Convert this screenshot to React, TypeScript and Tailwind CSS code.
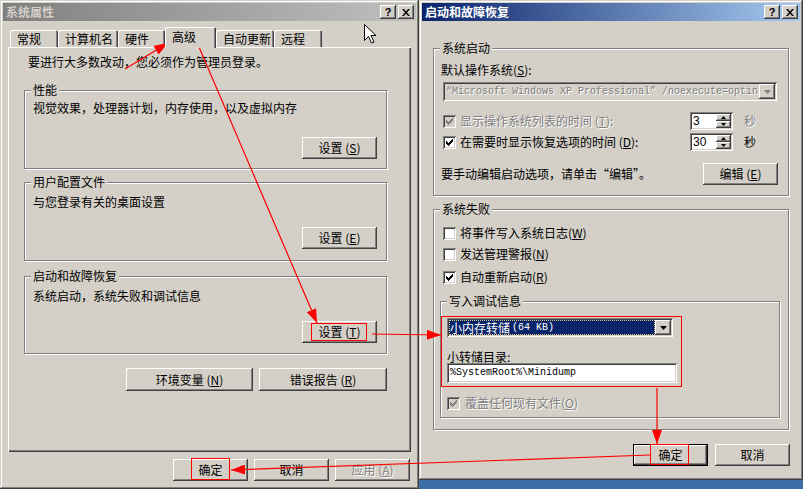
import React from "react";

const RAISED =
  "bg-[#d4d0c8] shadow-[inset_-1px_-1px_0_#404040,inset_1px_1px_0_#ffffff,inset_-2px_-2px_0_#808080]";
const SUNKEN =
  "shadow-[inset_1px_1px_0_#808080,inset_-1px_-1px_0_#ffffff,inset_2px_2px_0_#404040,inset_-2px_-2px_0_#d4d0c8]";
const WINDOW =
  "bg-[#d4d0c8] shadow-[inset_-1px_-1px_0_#404040,inset_1px_1px_0_#d4d0c8,inset_-2px_-2px_0_#808080,inset_2px_2px_0_#ffffff]";
const ETCHED = "border border-[#808080] shadow-[1px_1px_0_#ffffff,inset_1px_1px_0_#ffffff]";
const DIS = "text-[#808080] [text-shadow:1px_1px_0_#ffffff]";
const MONO = "font-['Liberation_Mono',monospace] text-[10px]";

function U({ c }: { c: string }) {
  return <span className="underline underline-offset-[1px]">{c}</span>;
}

function Btn({
  children,
  className = "",
  disabled = false,
  isDefault = false,
}: {
  children: React.ReactNode;
  className?: string;
  disabled?: boolean;
  isDefault?: boolean;
}) {
  const inner = (
    <div className={`flex h-full w-full items-center justify-center ${RAISED} ${disabled ? DIS : ""}`}>
      {children}
    </div>
  );
  return <div className={`${isDefault ? "border border-black" : ""} ${className}`}>{inner}</div>;
}

function CheckMark({ color }: { color: string }) {
  const cols = [
    [3, 5],
    [4, 6],
    [5, 7],
    [6, 6],
    [7, 5],
    [8, 4],
    [9, 3],
  ];
  return (
    <svg width="13" height="13" viewBox="0 0 13 13" className="block">
      {cols.map(([x, y]) => (
        <rect key={x} x={x} y={y} width="1" height="3" fill={color} />
      ))}
    </svg>
  );
}

function Check({ checked = false, disabled = false }: { checked?: boolean; disabled?: boolean }) {
  return (
    <div className={`h-[13px] w-[13px] shrink-0 ${disabled ? "bg-[#d4d0c8]" : "bg-white"} ${SUNKEN}`}>
      {checked && <CheckMark color={disabled ? "#808080" : "#000000"} />}
    </div>
  );
}

function Tri({ up = false, color = "#000" }: { up?: boolean; color?: string }) {
  return (
    <svg width="7" height="4" viewBox="0 0 7 4" className="block">
      <path d={up ? "M3.5 0 L7 4 L0 4 Z" : "M0 0 L7 0 L3.5 4 Z"} fill={color} />
    </svg>
  );
}

function SmallTri({ up = false }: { up?: boolean }) {
  return (
    <svg width="5" height="3" viewBox="0 0 5 3" className="block">
      <path d={up ? "M2.5 0 L5 3 L0 3 Z" : "M0 0 L5 0 L2.5 3 Z"} fill="#000" />
    </svg>
  );
}

function Spin({ value }: { value: string }) {
  return (
    <div className={`flex h-[18px] w-[43px] bg-white p-[2px] ${SUNKEN}`}>
      <div className="flex-1 pl-[1px] font-['Liberation_Sans',sans-serif] text-[12px] leading-[14px]">{value}</div>
      <div className="flex w-[15px] flex-col">
        <div className={`flex flex-1 items-center justify-center ${RAISED}`}>
          <SmallTri up />
        </div>
        <div className={`flex flex-1 items-center justify-center ${RAISED}`}>
          <SmallTri />
        </div>
      </div>
    </div>
  );
}

function TBtn({ children }: { children: React.ReactNode }) {
  return (
    <div className={`flex h-[14px] w-[16px] items-center justify-center text-black ${RAISED}`}>{children}</div>
  );
}

function TitleBar({ title, active }: { title: string; active: boolean }) {
  return (
    <div
      className={`flex h-[18px] shrink-0 items-center pl-[3px] pr-[2px] ${
        active
          ? "bg-[linear-gradient(to_right,#0a246a,#a6caf0)] text-white"
          : "bg-[linear-gradient(to_right,#808080,#c0c0c0)] text-[#d4d0c8]"
      }`}
    >
      <span className="flex-1 font-bold">{title}</span>
      <TBtn>
        <span className="font-['Liberation_Sans',sans-serif] text-[11px] font-bold leading-none">?</span>
      </TBtn>
      <div className="w-[2px]" />
      <TBtn>
        <svg width="8" height="7" viewBox="0 0 8 7" className="block">
          <path d="M0 0 L2 0 L4 2.5 L6 0 L8 0 L5 3.5 L8 7 L6 7 L4 4.5 L2 7 L0 7 L3 3.5 Z" fill="#000" />
        </svg>
      </TBtn>
    </div>
  );
}

function Tab({ children, w, selected = false }: { children: React.ReactNode; w: string; selected?: boolean }) {
  return (
    <div
      className={`flex shrink-0 items-center bg-[#d4d0c8] pl-[7px] shadow-[inset_1px_1px_0_#ffffff,inset_-1px_0_0_#404040,inset_-2px_0_0_#808080] rounded-t-[2px] ${w} ${
        selected ? "relative z-10 -mb-px h-[21px] pb-[2px]" : "h-[17px]"
      }`}
    >
      {children}
    </div>
  );
}

function Group({
  label,
  className = "",
  children,
}: {
  label: string;
  className?: string;
  children: React.ReactNode;
}) {
  return (
    <div className={`relative flex shrink-0 flex-col ${ETCHED} ${className}`}>
      <span className="absolute left-[6px] top-[-8px] bg-[#d4d0c8] px-[2px] leading-[14px]">{label}</span>
      {children}
    </div>
  );
}

function LeftWindow() {
  return (
    <div className={`flex h-[489px] w-[419px] shrink-0 flex-col p-[3px] ${WINDOW}`}>
      <TitleBar title="系统属性" active={false} />
      <div className="flex flex-col px-[5px]">
        <div className="flex h-[26px] items-end pl-[2px]">
          <Tab w="w-[48px]">常规</Tab>
          <Tab w="w-[60px]">计算机名</Tab>
          <Tab w="w-[47px]">硬件</Tab>
          <Tab w="w-[51px]" selected>
            高级
          </Tab>
          <Tab w="w-[58px]">自动更新</Tab>
          <Tab w="w-[48px]">远程</Tab>
        </div>
        <div className="flex h-[405px] flex-col bg-[#d4d0c8] shadow-[inset_1px_1px_0_#ffffff,inset_-1px_-1px_0_#404040,inset_-2px_-2px_0_#808080]">
          <p className="ml-[20px] mt-[8px]">要进行大多数改动，您必须作为管理员登录。</p>
          <Group label="性能" className="ml-[16px] mt-[21px] h-[79px] w-[363px]">
            <p className="pl-[8px] pt-[10px]">视觉效果，处理器计划，内存使用，以及虚拟内存</p>
            <div className="mt-[22px] flex justify-end pr-[9px]">
              <Btn className="h-[22px] w-[75px]">
                设置 (<U c="S" />)
              </Btn>
            </div>
          </Group>
          <Group label="用户配置文件" className="ml-[16px] mt-[13px] h-[79px] w-[363px]">
            <p className="pl-[8px] pt-[12px]">与您登录有关的桌面设置</p>
            <div className="mt-[18px] flex justify-end pr-[9px]">
              <Btn className="h-[22px] w-[75px]">
                设置 (<U c="E" />)
              </Btn>
            </div>
          </Group>
          <Group label="启动和故障恢复" className="ml-[16px] mt-[15px] h-[78px] w-[363px]">
            <p className="pl-[8px] pt-[12px]">系统启动，系统失败和调试信息</p>
            <div className="mt-[18px] flex justify-end pr-[9px]">
              <Btn className="h-[22px] w-[75px]">
                设置 (<U c="T" />)
              </Btn>
            </div>
          </Group>
          <div className="ml-[16px] mt-[14px] flex w-[363px] justify-end gap-[6px]">
            <Btn className="h-[23px] w-[127px]">
              环境变量 (<U c="N" />)
            </Btn>
            <Btn className="h-[23px] w-[128px]">
              错误报告 (<U c="R" />)
            </Btn>
          </div>
        </div>
        <div className="mt-[7px] flex justify-end gap-[6px] pr-[1px]">
          <Btn className="h-[22px] w-[75px]">确定</Btn>
          <Btn className="h-[22px] w-[75px]">取消</Btn>
          <Btn className="h-[22px] w-[75px]" disabled>
            应用 (<U c="A" />)
          </Btn>
        </div>
      </div>
    </div>
  );
}

function RightWindow() {
  return (
    <div className={`flex h-[480px] w-[384px] shrink-0 flex-col p-[3px] ${WINDOW}`}>
      <TitleBar title="启动和故障恢复" active />
      <Group label="系统启动" className="ml-[11px] mt-[27px] h-[148px] w-[356px]">
        <p className="pl-[7px] pt-[14px]">
          默认操作系统(<U c="S" />):
        </p>
        <div className={`ml-[9px] mt-[5px] flex h-[19px] w-[334px] items-center bg-[#d4d0c8] p-[2px] ${SUNKEN}`}>
          <div className={`flex-1 overflow-hidden whitespace-nowrap pl-[1px] leading-[14px] ${MONO} ${DIS}`}>
            “Microsoft Windows XP Professional” /noexecute=optin
          </div>
          <div className={`flex h-[15px] w-[16px] shrink-0 items-center justify-center ${RAISED}`}>
            <Tri color="#808080" />
          </div>
        </div>
        <div className="ml-[9px] mt-[11px] flex h-[18px] items-center">
          <div className="flex w-[247px] items-center gap-[4px]">
            <Check checked disabled />
            <span className={DIS}>
              显示操作系统列表的时间 (<U c="T" />):
            </span>
          </div>
          <Spin value="3" />
          <span className={`ml-[11px] ${DIS}`}>秒</span>
        </div>
        <div className="ml-[9px] mt-[3px] flex h-[18px] items-center">
          <div className="flex w-[247px] items-center gap-[4px]">
            <Check checked />
            <span>
              在需要时显示恢复选项的时间 (<U c="D" />):
            </span>
          </div>
          <Spin value="30" />
          <span className="ml-[11px]">秒</span>
        </div>
        <div className="mt-[12px] flex h-[22px] items-center justify-between pl-[7px] pr-[10px]">
          <span>要手动编辑启动选项，请单击“编辑”。</span>
          <Btn className="h-[22px] w-[75px]">
            编辑 (<U c="E" />)
          </Btn>
        </div>
      </Group>
      <Group label="系统失败" className="ml-[11px] mt-[13px] h-[221px] w-[356px]">
        <div className="ml-[9px] mt-[16px] flex h-[14px] items-center gap-[4px]">
          <Check />
          <span>
            将事件写入系统日志(<U c="W" />)
          </span>
        </div>
        <div className="ml-[9px] mt-[7px] flex h-[14px] items-center gap-[4px]">
          <Check />
          <span>
            发送管理警报(<U c="N" />)
          </span>
        </div>
        <div className="ml-[9px] mt-[9px] flex h-[14px] items-center gap-[4px]">
          <Check checked />
          <span>
            自动重新启动(<U c="R" />)
          </span>
        </div>
        <Group label="写入调试信息" className="ml-[6px] mt-[17px] h-[117px] w-[340px]">
          <div className={`ml-[6px] mt-[16px] flex h-[19px] w-[226px] items-center bg-white p-[2px] ${SUNKEN}`}>
            <div className="flex h-[15px] flex-1 items-center bg-[#0a246a] pl-[1px] text-white outline-1 outline-dotted outline-offset-[-1px] outline-[#d8c880]">
              <span>小内存转储</span>
              <span className={`${MONO} ml-[2px]`}>(64 KB)</span>
            </div>
            <div className={`flex h-[15px] w-[16px] shrink-0 items-center justify-center ${RAISED}`}>
              <Tri />
            </div>
          </div>
          <p className="ml-[6px] mt-[14px] leading-[12px]">小转储目录:</p>
          <div className={`ml-[6px] flex h-[20px] w-[230px] items-center bg-white px-[3px] ${SUNKEN}`}>
            <span className={MONO}>%SystemRoot%\Minidump</span>
          </div>
          <div className="ml-[6px] mt-[13px] flex h-[14px] items-center gap-[5px]">
            <Check checked disabled />
            <span className={DIS}>
              覆盖任何现有文件(<U c="O" />)
            </span>
          </div>
        </Group>
      </Group>
      <div className="mt-[14px] flex justify-end gap-[7px] pr-[10px]">
        <Btn className="h-[22px] w-[75px]" isDefault>
          确定
        </Btn>
        <Btn className="h-[22px] w-[75px]">取消</Btn>
      </div>
    </div>
  );
}

function Overlay() {
  const lines: [number, number, number, number][] = [
    [125, 69, 168, 43],
    [199, 47, 317, 323],
    [372, 334, 441, 335],
    [657, 388, 657, 444],
    [650, 455, 231, 470],
  ];
  return (
    <svg
      className="pointer-events-none absolute left-0 top-0"
      width="803"
      height="489"
      viewBox="0 0 803 489"
    >
      <defs>
        <marker
          id="ah"
          markerWidth="14"
          markerHeight="10"
          refX="14"
          refY="5"
          orient="auto"
          markerUnits="userSpaceOnUse"
        >
          <path d="M0 0 L14 5 L0 10 Z" fill="#ff0000" />
        </marker>
      </defs>
      <g stroke="#ff0000" strokeWidth="1" fill="none">
        <rect x="170.5" y="28.5" width="32" height="17" />
        <rect x="311.5" y="323.5" width="55" height="17" />
        <rect x="191.5" y="458.5" width="38" height="21" />
        <rect x="650.5" y="444.5" width="38" height="20" />
        <rect x="441.5" y="316.5" width="240" height="70" />
      </g>
      {lines.map(([x1, y1, x2, y2], i) => (
        <line
          key={i}
          x1={x1}
          y1={y1}
          x2={x2}
          y2={y2}
          stroke="#ff0000"
          strokeWidth="1.2"
          markerEnd="url(#ah)"
        />
      ))}
      <path
        transform="translate(364.5 24.5)"
        d="M0 0 L0 16 L4 12 L7 18.5 L9.5 17.5 L6.5 11 L11.5 11 Z"
        fill="#ffffff"
        stroke="#000000"
        strokeWidth="1"
      />
    </svg>
  );
}

export default function App() {
  return (
    <div className="relative flex h-[489px] w-[803px] items-start overflow-hidden bg-[#3a6ea5] font-['Noto_Sans_CJK_SC','Noto_Sans',sans-serif] text-[12px] leading-[14px] text-black">
      <LeftWindow />
      <RightWindow />
      <Overlay />
    </div>
  );
}
